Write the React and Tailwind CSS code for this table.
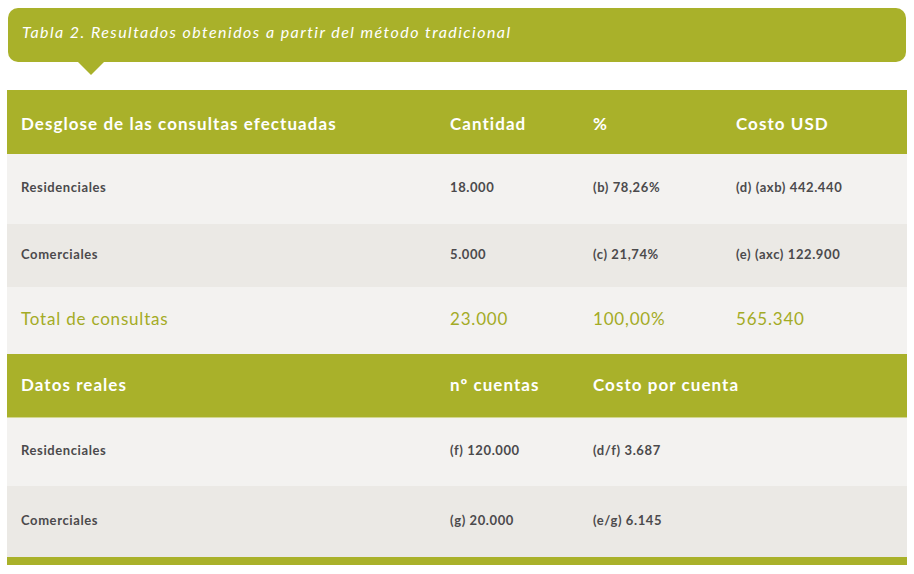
const cols = "grid grid-cols-[429px_143px_143px_185px] items-center";

const green = "bg-[#a9b12a]";

function HeaderRow({ cells, className = "" }) {
  return (
    <div className={`${cols} ${green} text-white font-bold text-[17px] tracking-[1.05px] ${className}`}>
      {cells.map((c, i) => (
        <div key={i} className="pl-[14px] whitespace-nowrap">{c}</div>
      ))}
    </div>
  );
}

function BodyRow({ cells, bg, h }) {
  return (
    <div className={`${cols} ${bg} ${h} text-[#4b4a4c] font-bold text-[13px] tracking-[0.6px] pb-[2px]`}>
      {cells.map((c, i) => (
        <div key={i} className="pl-[14px] whitespace-nowrap">{c}</div>
      ))}
    </div>
  );
}

export default function App() {
  return (
    <div className="w-[914px] h-[574px] bg-white pt-2 font-['Lato',sans-serif] overflow-hidden">
      <div className="relative mx-2">
        <div className={`${green} h-[54px] rounded-[10px] pl-[14px] pt-[12px] text-white italic text-[16px] tracking-[1.45px] whitespace-nowrap`}>
          Tabla 2. Resultados obtenidos a partir del método tradicional
        </div>
        <div className="absolute left-[70px] top-[54px] w-0 h-0 border-l-[13px] border-r-[13px] border-t-[13px] border-l-transparent border-r-transparent border-t-[#a9b12a]" />
      </div>

      <div className="mx-[7px] mt-[28px] w-[900px]">
        <HeaderRow className="h-[64px] pt-[4px]" cells={["Desglose de las consultas efectuadas", "Cantidad", "%", "Costo USD"]} />
        <BodyRow bg="bg-[#f3f2f0]" h="h-[70px]" cells={["Residenciales", "18.000", "(b) 78,26%", "(d) (axb) 442.440"]} />
        <BodyRow bg="bg-[#ebe9e5]" h="h-[63px]" cells={["Comerciales", "5.000", "(c) 21,74%", "(e) (axc) 122.900"]} />
        <div className={`${cols} bg-[#f3f2f0] h-[67px] text-[#a3ab25] text-[17px] tracking-[0.8px] pb-[3px]`}>
          <div className="pl-[14px] whitespace-nowrap">Total de consultas</div>
          <div className="pl-[14px] whitespace-nowrap">23.000</div>
          <div className="pl-[14px] whitespace-nowrap">100,00%</div>
          <div className="pl-[14px] whitespace-nowrap">565.340</div>
        </div>
        <HeaderRow className="h-[64px] pb-[2px] border-b border-[#d3d78f]" cells={["Datos reales", "nº cuentas", "Costo por cuenta", ""]} />
        <BodyRow bg="bg-[#f3f2f0]" h="h-[68px]" cells={["Residenciales", "(f) 120.000", "(d/f) 3.687", ""]} />
        <BodyRow bg="bg-[#ebe9e5]" h="h-[71px]" cells={["Comerciales", "(g) 20.000", "(e/g) 6.145", ""]} />
        <div className={`${green} h-[8px]`} />
      </div>
    </div>
  );
}
